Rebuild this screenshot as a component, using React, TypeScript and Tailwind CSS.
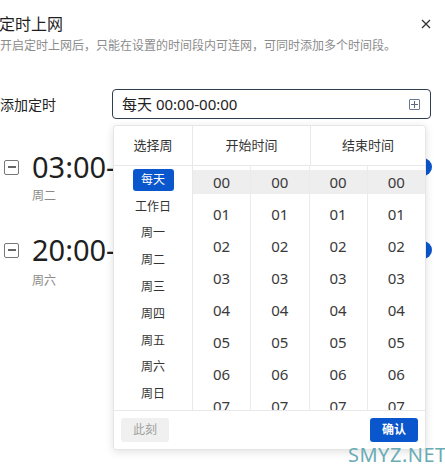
import React from "react";

const weeks = ["每天", "工作日", "周一", "周二", "周三", "周四", "周五", "周六", "周日"];
const hours = ["00", "01", "02", "03", "04", "05", "06", "07"];

const MinusBox: React.FC = () => (
	<div className="w-[15px] h-[15px] border border-[#777] rounded-[2px] flex items-center justify-center shrink-0">
		<div className="w-[8px] h-[1.5px] bg-[#666]" />
	</div>
);

const TimeItem: React.FC<{ time: string; day: string; top: string; dayTop: string }> = ({ time, day, top, dayTop }) => (
	<div className={top}>
		<div className="flex items-center justify-between pr-[13px]">
			<div className="flex items-center">
				<div className="ml-[4px] mr-[13px]">
					<MinusBox />
				</div>
				<span className="text-[29px] leading-[34px] text-[#1f1f1f]">{time}</span>
			</div>
			<div className="w-[36px] h-[18px] rounded-full bg-[#0a56cc]" />
		</div>
		<div className={`${dayTop} pl-[32px] text-[12px] leading-[16px] text-[#8a8a8a]`}>{day}</div>
	</div>
);

const HourCol: React.FC<{ last?: boolean }> = ({ last }) => (
	<div className={`flex-1 pt-[4px] ${last ? "" : "border-r border-[#ebebeb]"}`}>
		{hours.map((h, i) => (
			<div
				key={h}
				className={`h-[24px] mb-[8px] flex items-center justify-center text-[15px] text-[#3a3a3a] ${i === 0 ? "bg-[#eeeeee]" : ""}`}
			>
				{h}
			</div>
		))}
	</div>
);

export default function App() {
	return (
		<div
			className="relative w-[445px] h-[475px] overflow-hidden bg-white"
			style={{ fontFamily: '"Noto Sans", "Noto Sans CJK SC", sans-serif' }}
		>
			<div className="pt-[14px] flex items-center justify-between pr-[14px]">
				<span className="-ml-[1px] text-[16px] leading-[20px] text-[#1f1f1f]">定时上网</span>
				<svg width="10" height="10" viewBox="0 0 10 10" className="text-[#333]">
					<path d="M1 1 L9 9 M9 1 L1 9" stroke="currentColor" strokeWidth="1.3" />
				</svg>
			</div>
			<div className="mt-[2px] text-[12px] leading-[20px] text-[#8c8c8c]">
				开启定时上网后，只能在设置的时间段内可连网，可同时添加多个时间段。
			</div>

			<div className="mt-[33px] flex items-center h-[30px]">
				<span className="w-[112px] text-[14px] text-[#222]">添加定时</span>
				<div className="w-[319px] h-[30px] border border-[#2f3f52] rounded-[4px] flex items-center justify-between pl-[9px] pr-[10px]">
					<span className="text-[15px] text-[#222]">每天 00:00-00:00</span>
					<div className="w-[11px] h-[11px] border border-[#6b7a90] rounded-[1px] relative flex items-center justify-center">
						<div className="absolute w-[7px] h-[1px] bg-[#5b6a80]" />
						<div className="absolute w-[1px] h-[7px] bg-[#5b6a80]" />
					</div>
				</div>
			</div>

			<TimeItem time="03:00-" day="周二" top="mt-[31px]" dayTop="mt-[4px]" />
			<TimeItem time="20:00-" day="周六" top="mt-[29px]" dayTop="mt-[6px]" />

			<div className="absolute left-[113px] top-[125px] w-[313px] h-[325px] bg-white border border-[#e6e6e6] rounded-[3px] shadow-[0_2px_8px_rgba(0,0,0,0.12)] flex flex-col">
				<div className="h-[40px] flex border-b border-[#e8e8e8] text-[13px] text-[#333]">
					<div className="w-[79px] flex items-center justify-center border-r border-[#e8e8e8]">选择周</div>
					<div className="w-[118px] flex items-center justify-center border-r border-[#e8e8e8]">开始时间</div>
					<div className="flex-1 flex items-center justify-center">结束时间</div>
				</div>
				<div className="h-[245px] flex overflow-hidden border-b border-[#e8e8e8]">
					<div className="w-[79px] pt-[3px] border-r border-[#e8e8e8] flex flex-col items-center">
						{weeks.map((w, i) => (
							<div
								key={w}
								className={`h-[22px] mb-[5px] flex items-center justify-center text-[12px] ${
									i === 0 ? "w-[41px] rounded-[3px] bg-[#0a56cc] text-white" : "text-[#333]"
								}`}
							>
								{w}
							</div>
						))}
					</div>
					<HourCol />
					<HourCol />
					<HourCol />
					<HourCol last />
				</div>
				<div className="flex-1 flex items-center justify-between px-[7px]">
					<button className="w-[48px] h-[24px] rounded-[3px] bg-[#f0f0f0] text-[12px] text-[#a0a0a0]">此刻</button>
					<button className="w-[48px] h-[24px] rounded-[3px] bg-[#0a56cc] text-[12px] font-bold text-white">确认</button>
				</div>
			</div>

			<div className="absolute left-[348px] top-[444px] text-[20px] leading-[22px] text-[#6aacb4] tracking-[0.5px]">
				SMYZ.NET
			</div>
		</div>
	);
}
